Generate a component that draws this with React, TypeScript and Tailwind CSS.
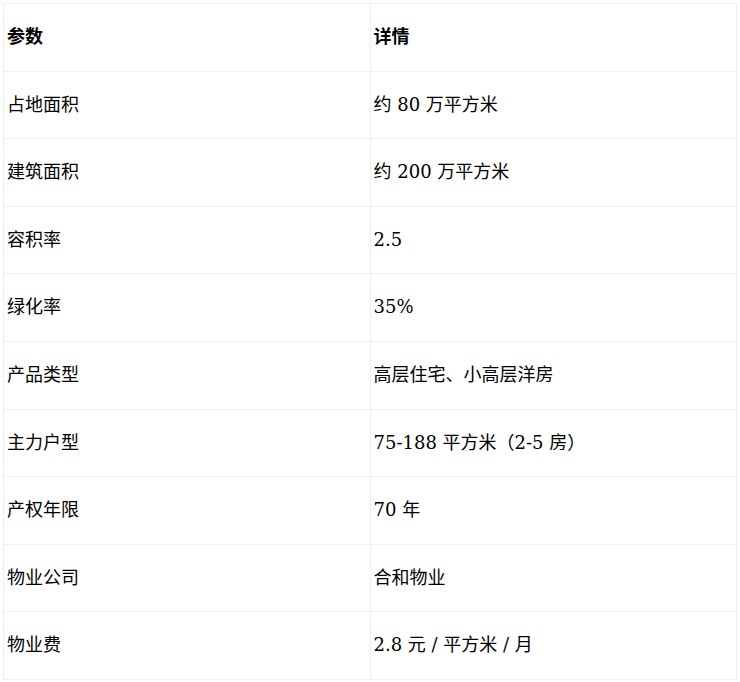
import React from "react";

const rows: [string, string][] = [
  ["占地面积", "约 80 万平方米"],
  ["建筑面积", "约 200 万平方米"],
  ["容积率", "2.5"],
  ["绿化率", "35%"],
  ["产品类型", "高层住宅、小高层洋房"],
  ["主力户型", "75-188 平方米（2-5 房）"],
  ["产权年限", "70 年"],
  ["物业公司", "合和物业"],
  ["物业费", "2.8 元 / 平方米 / 月"],
];

export default function App() {
  return (
    <div className="bg-white p-[3px] text-black font-['DejaVu_Serif','Noto_Sans_CJK_SC',serif]">
      <table className="w-[734px] border-collapse text-[18px] table-fixed">
        <thead>
          <tr>
            <th className="w-1/2 border border-[#efefef] px-[3px] py-5 text-left font-bold leading-[26.6px]">参数</th>
            <th className="w-1/2 border border-[#efefef] px-[3px] py-5 text-left font-bold leading-[26.6px]">详情</th>
          </tr>
        </thead>
        <tbody>
          {rows.map(([k, v]) => (
            <tr key={k}>
              <td className="border border-[#efefef] px-[3px] py-5 leading-[26.6px]">{k}</td>
              <td className="border border-[#efefef] px-[3px] py-5 leading-[26.6px]">{v}</td>
            </tr>
          ))}
        </tbody>
      </table>
    </div>
  );
}
